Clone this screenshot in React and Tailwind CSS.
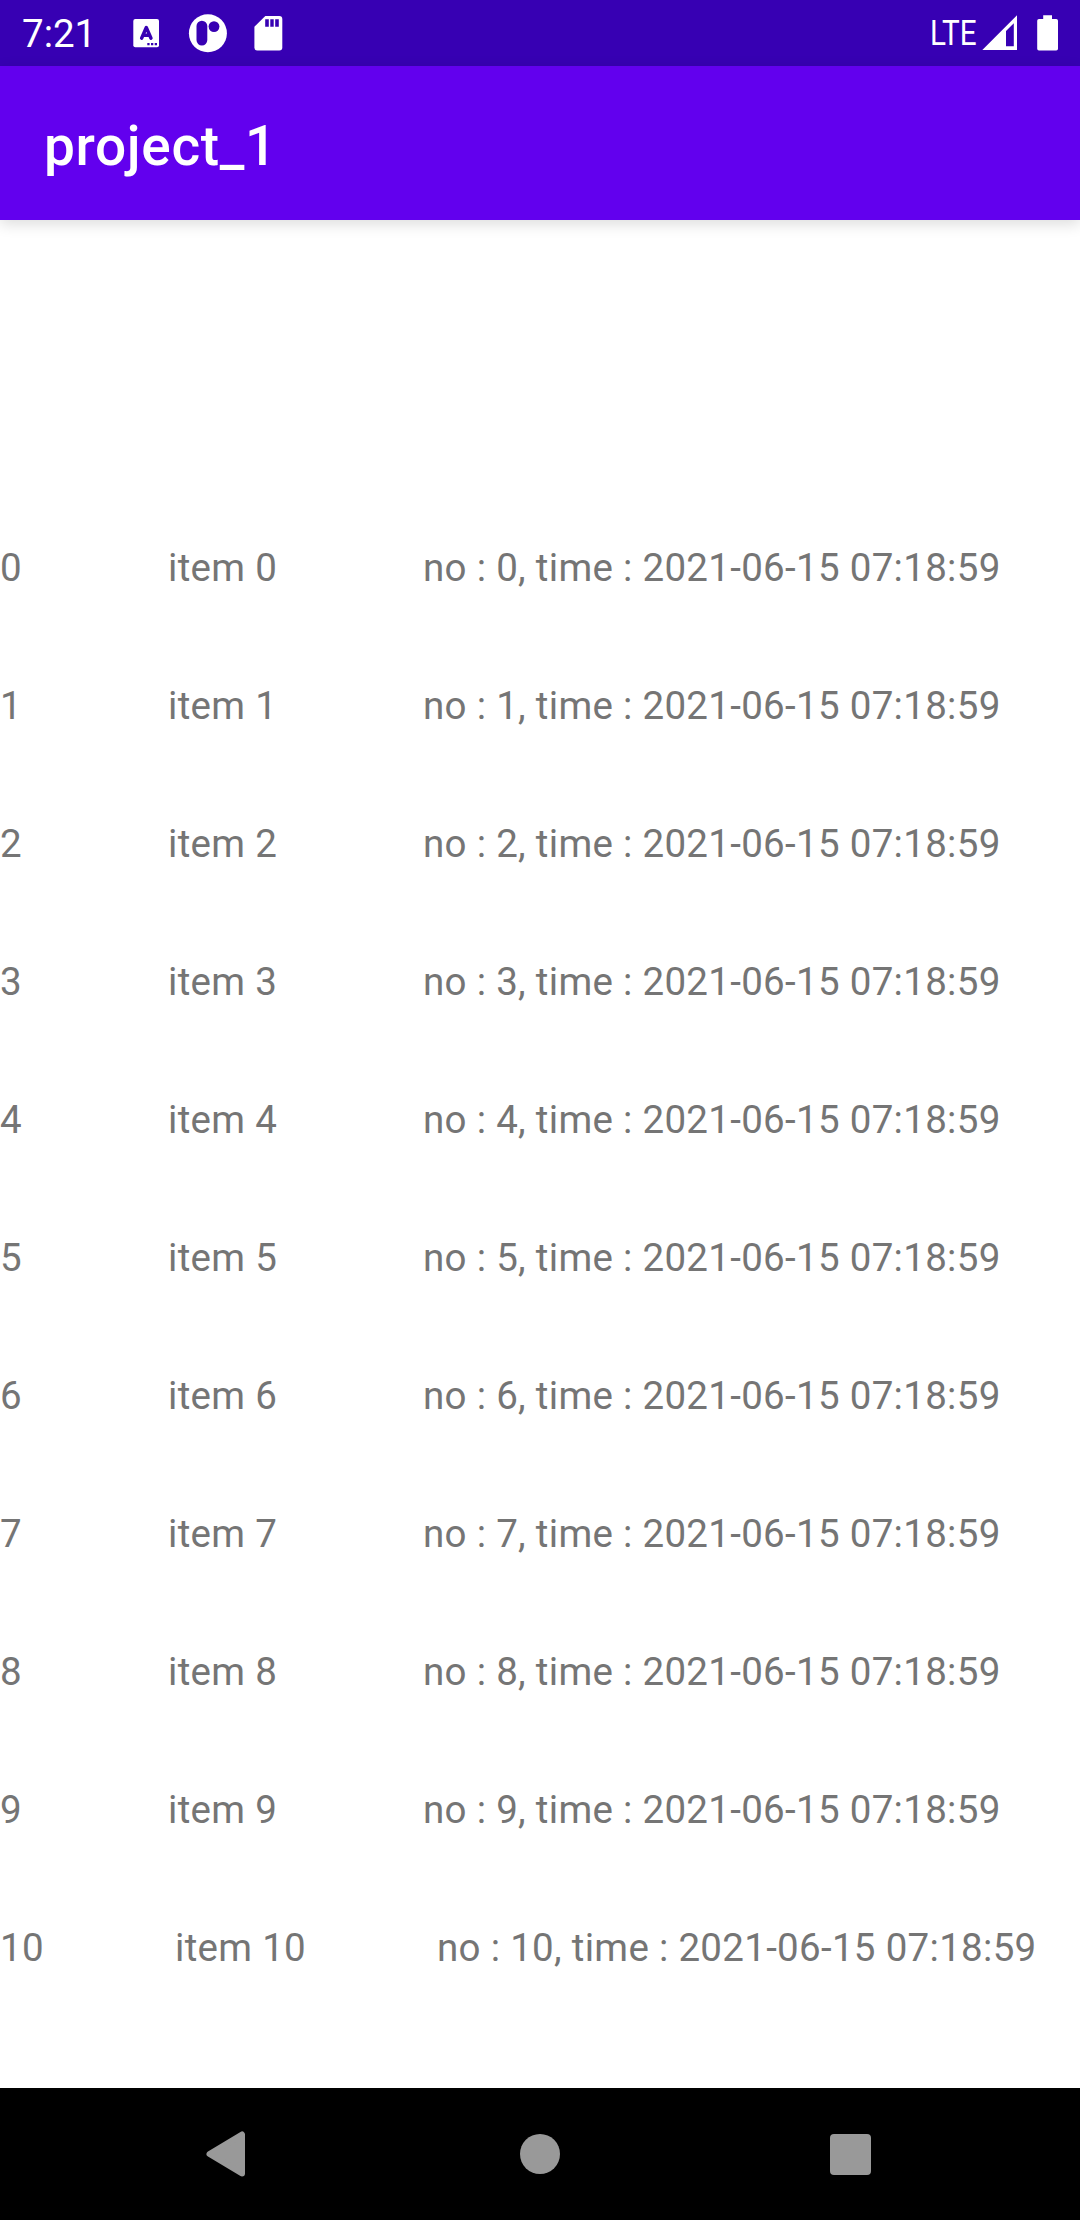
const rows = Array.from({ length: 11 }, (_, i) => i);

function StatusBar() {
  return (
    <header className="flex h-[66px] shrink-0 items-center bg-[#3700b3] pl-[22px] text-white">
      <span className="w-[110px] pt-[2px] text-[38.5px] leading-none">7:21</span>
      <svg className="h-[30px] w-[28px]" viewBox="132 18 28 30">
        <rect x="133.3" y="19" width="25.7" height="28.3" rx="2" fill="#fff" />
        <path d="M141.6 38.3L146.3 27.5L151 38.3M143.3 35.2H149.3" fill="none" stroke="#3700b3" strokeWidth="3.4" strokeLinecap="round" strokeLinejoin="round" />
        <path d="M147.3 43h2.3v2.3h-2.3zM151 43h2.3v2.3H151zM154.7 43h2.3v2.3h-2.3z" fill="#3700b3" />
      </svg>
      <svg className="ml-7 size-[40px]" viewBox="187.5 13 40 40">
        <circle cx="207.4" cy="33.2" r="19" fill="#fff" />
        <rect x="196" y="20.7" width="10.8" height="24.8" rx="5.4" fill="#3700b3" />
        <circle cx="213.5" cy="26.6" r="5.4" fill="#3700b3" />
      </svg>
      <svg className="ml-[26px] h-[36px] w-[30px]" viewBox="254 15 30 36">
        <path d="M265.3 16H279.3Q282.3 16 282.3 19V47.6Q282.3 50.6 279.3 50.6H257.3Q254.4 50.6 254.4 47.6V26.8Z" fill="#fff" />
        <path d="M265.2 19.3h3.6v7.4h-3.6zM270.3 19.3h3.4v7.4h-3.4zM275.2 19.3h3.6v7.4h-3.6z" fill="#3700b3" />
      </svg>
      <div className="ml-auto flex w-[150px] items-center">
        <span className="w-[52px] origin-left scale-x-[0.86] text-[34.5px] leading-none">LTE</span>
        <svg className="h-[36px] w-[36px]" viewBox="982 15 36 36">
          <path d="M982.3 50L1017 15.3V50ZM1006 31V46.2H1013.8V23.2Z" fill="#fff" fillRule="evenodd" />
        </svg>
        <svg className="ml-[19px] h-[36px] w-[22px]" viewBox="1037 15 22 36">
          <path d="M1043.2 15.2H1052V19H1056.2Q1058 19 1058 20.8V48.8Q1058 50.6 1056.2 50.6H1039Q1037.2 50.6 1037.2 48.8V20.8Q1037.2 19 1039 19H1043.2Z" fill="#fff" />
        </svg>
      </div>
    </header>
  );
}

function NavBar() {
  return (
    <nav className="flex h-[132px] shrink-0 items-center bg-black pl-[206px]">
      <svg className="h-[46px] w-10" viewBox="0 0 40 46">
        <path d="M3.5 23L36 3.5V42.5Z" fill="#999" stroke="#999" strokeWidth="6" strokeLinejoin="round" />
      </svg>
      <div className="ml-[274px] size-10 rounded-full bg-[#999]" />
      <div className="ml-[270px] size-[41px] rounded-[4px] bg-[#999]" />
    </nav>
  );
}

export default function App() {
  return (
    <div className="flex h-[2220px] w-[1080px] flex-col overflow-hidden bg-white font-['Roboto',sans-serif]">
      <StatusBar />
      <div className="flex h-[154px] shrink-0 items-center bg-[#6200ee] px-11 pt-[7px] shadow-[0_4px_14px_rgba(0,0,0,0.14)]">
        <h1 className="text-[55px] font-medium leading-none tracking-[0.65px] text-white">project_1</h1>
      </div>
      <main className="flex-1 pt-[278px]">
        {rows.map((n) => (
          <div
            key={n}
            className="flex h-[138px] items-start whitespace-nowrap pt-[44px] text-[38.5px] leading-[52px] tracking-[0.3px] text-[#757575]"
          >
            <span className={n < 10 ? "w-[168px]" : "w-[175px]"}>{n}</span>
            <span className={n < 10 ? "w-[255px]" : "w-[262px]"}>item {n}</span>
            <span>no : {n}, time : 2021-06-15 07:18:59</span>
          </div>
        ))}
      </main>
      <NavBar />
    </div>
  );
}
